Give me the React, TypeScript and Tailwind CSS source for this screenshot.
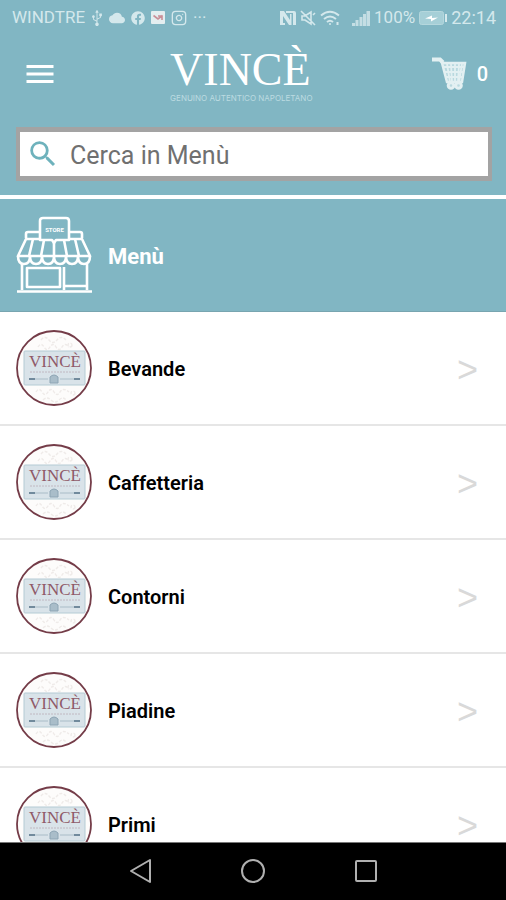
import React from 'react';
import { FaFacebook, FaUsb } from 'react-icons/fa';
import { MdCloud, MdMenu, MdSearch } from 'react-icons/md';
import { Instagram } from 'lucide-react';

const categories = ['Bevande', 'Caffetteria', 'Contorni', 'Piadine', 'Primi'];

const MailIcon = () => (
  <svg viewBox="0 0 14 14" className="w-3.5 h-3.5">
    <rect width="14" height="13" rx="1" fill="#e4eef0" />
    <path d="M2.500 4.500 7 8l4.500-3.500M7 5h4v4" fill="none" stroke="#c98f98" strokeWidth="1.600" />
  </svg>
);

const NfcIcon = () => (
  <svg viewBox="0 0 16 16" className="w-4 h-4" fill="currentColor">
    <path d="M0 1h4l6 9V4h1.500v11H9L3 6v7h2v2H0z" />
    <path d="M6 1h8q2 0 2 2v12h-3V3H6z" />
  </svg>
);

const MuteIcon = () => (
  <svg viewBox="0 0 16 16" className="w-4 h-4" fill="none" stroke="currentColor" strokeWidth="1.600">
    <path d="M2 6h3l6-4v12L5 10H2zM1 1l14 14M13 5l2-2" />
  </svg>
);

const WifiIcon = () => (
  <svg viewBox="0 0 20 16" className="w-5 h-4" fill="none" stroke="currentColor" strokeWidth="2">
    <path d="M1 5.500Q10-2 19 5.500M4 9q6-5 12 0M7 12q3-2.500 6 0" />
    <circle cx="10" cy="14" r="1" fill="currentColor" stroke="none" />
    <path d="M17.500 12v3" />
  </svg>
);

const SignalIcon = () => (
  <svg viewBox="0 0 18 16" className="w-[18px] h-4" fill="currentColor">
    <path d="M0 13h3v3H0zM3.500 10h3v6h-3zM7.500 7h3v9h-3zM11 4h3v12h-3zM14.500 1h3.500v15h-3.500z" opacity=".8" />
  </svg>
);

const BatteryIcon = () => (
  <svg viewBox="0 0 28 14" className="w-7 h-3.5">
    <rect x=".5" y=".5" width="24" height="13" rx="2" fill="#a6cfd7" stroke="#b5d7dd" />
    <rect x="26" y="3" width="2" height="8" fill="#d7eaed" />
    <path d="M6 7.500l7-3v2.500l6-.5-7 4V8z" fill="#fff" />
  </svg>
);

const CartIcon = () => (
  <svg viewBox="0 0 36 34" className="w-9 h-[34px]" fill="none" stroke="#e3f0f2">
    <path d="M1 2.500h8l3 3" strokeWidth="4" />
    <path d="M11 6h23l-3 19H16z" fill="#b9d9df" strokeWidth="2.500" />
    <path d="M12 10h21M13 15h20M14 20h18M16 7l3 18M20 7l1 18M24 7v18M28 7l-1 18M31 7l-3 18" strokeWidth="1.800" />
    <circle cx="20" cy="28.500" r="2.800" fill="#b9d9df" strokeWidth="3" />
    <circle cx="27.500" cy="28.500" r="2.800" fill="#b9d9df" strokeWidth="3" />
  </svg>
);

const StoreIcon = () => (
  <svg viewBox="0 0 76 78" className="w-[76px] h-[78px] shrink-0" fill="none" stroke="#fff" strokeWidth="2.600" strokeLinejoin="round">
    <path d="M24 24V5q0-3 3-3h23q3 0 3 3v19H40l-2 3-2-3z" />
    <path d="M24 16H12q-2 0-2 2v4M53 16h11q2 0 2 2v4" />
    <path d="M24 23H10L2 40h72L66 23H53" />
    <path d="M17 23l-4 17M28 24l-3 16M38 27v13M48 24l3 16M59 23l4 17" />
    <path d="M2 40q0 8 6 8t6-8q0 8 6 8t6-8q0 8 6 8t6-8q0 8 6 8t6-8q0 8 6 8t6-8q0 8 6 8t6-8" />
    <path d="M6 48v26M71 48v26M11 52h33v19H11zM48 51v23M48 70h23M1 75.500h75" />
    <text x="38.500" y="16" textAnchor="middle" fill="#fff" stroke="none" fontSize="6" fontWeight="700" className="font-['Roboto',sans-serif]">STORE</text>
  </svg>
);

const Badge = () => (
  <svg viewBox="0 0 76 76" className="w-[76px] h-[76px] shrink-0">
    <circle cx="38" cy="38" r="37" fill="#fdfcfb" stroke="#743c48" strokeWidth="1.800" />
    <g fill="none" stroke="#efebe9" strokeWidth="1.400" strokeDasharray="3 1.500">
      <path d="M25 10q4-5 8 0t8 0 9 0M22 17q3-5 6 0t6 0 6 0 6 0 7 0" />
      <path d="M20 62q3-5 6 0t6 0 6 0 6 0 9 0M27 70q4-4 8 0t8 0 7 0" />
      <circle cx="54" cy="15" r="2" />
      <circle cx="57" cy="63" r="2" />
    </g>
    <rect x="8" y="21" width="61" height="34" rx="1" fill="#d9e3e9" stroke="#b4cbd4" />
    <text x="39" y="37" textAnchor="middle" fontSize="17" fill="#8f5968" className="font-['Liberation_Serif',serif]">VINCÈ</text>
    <path d="M14 42h50" stroke="#c0b8c1" strokeDasharray="2 1" />
    <path d="M13 49h6M58 49h6" stroke="#718a9c" strokeWidth="2" />
    <path d="M19 49h13M44 49h14" stroke="#a9bcc7" />
    <path d="M34 53v-6q4-4 8 0v6z" fill="#a9bdc9" stroke="#8da5b4" />
  </svg>
);

const StatusBar = () => (
  <div className="flex items-center justify-between pl-3 pr-2.5 h-9 text-[17px] text-[#d4e8ec]">
    <div className="flex items-center gap-1.5">
      <span>WINDTRE</span>
      <FaUsb className="w-4 h-4 -mx-0.5 -rotate-90" />
      <MdCloud className="w-4 h-4" />
      <FaFacebook className="w-3.5 h-3.5" />
      <MailIcon />
      <Instagram className="w-4 h-4" />
      <span>···</span>
    </div>
    <div className="flex items-center gap-1">
      <NfcIcon />
      <MuteIcon />
      <WifiIcon />
      <span className="w-1" />
      <SignalIcon />
      <span>100%</span>
      <BatteryIcon />
      <span className="text-lg">22:14</span>
    </div>
  </div>
);

const Header = () => (
  <header className="bg-[#81b6c3] border-b-4 border-white">
    <StatusBar />
    <div className="flex items-center justify-between h-[91px] pl-[22px] pr-[18px] pb-4">
      <button type="button" aria-label="Apri menu" className="text-white">
        <MdMenu className="w-9 h-9" />
      </button>
      <div className="flex flex-col items-start text-white">
        <span className="font-['Liberation_Serif',serif] text-[46px] leading-[48px]">VINCÈ</span>
        <span className="text-[8px] leading-2 text-[#bcdbe1] font-['Inter',sans-serif]">GENUINO AUTENTICO NAPOLETANO</span>
      </div>
      <button type="button" aria-label="Carrello" className="flex items-center gap-2.5 pl-1.5 text-xl font-medium text-white">
        <CartIcon />
        <span>0</span>
      </button>
    </div>
    <div className="pl-4 pr-3.5 pb-3.5">
      <label className="flex items-center gap-2.5 h-[54px] px-1.5 bg-white border-x-4 border-y-[5px] border-[#a3a3a3]">
        <MdSearch className="w-[34px] h-[34px] shrink-0 text-[#6eb2bc]" />
        <input
          type="text"
          aria-label="Cerca in Menù"
          placeholder="Cerca in Menù"
          className="w-full pt-1 text-[25px] outline-none placeholder:text-[#707070]"
        />
      </label>
    </div>
  </header>
);

const CategoryRow = ({ name }: { name: string }) => (
  <li className="border-b-2 border-[#e6e6e6]">
    <a href="#" className="flex items-center gap-4 h-28 pl-4 pr-7">
      <Badge />
      <span className="flex-1 pt-0.5 text-xl font-semibold text-black">{name}</span>
      <span className="pt-1 text-4xl leading-none text-[#d9d9d9] font-['Liberation_Sans',sans-serif]">&gt;</span>
    </a>
  </li>
);

const NavBar = () => (
  <nav className="flex justify-center items-center gap-[88px] h-[58px] pb-0.5 shrink-0 bg-black border-t border-[#777]">
    <button type="button" aria-label="Indietro">
      <svg viewBox="0 0 24 26" className="w-6 h-[26px]" fill="none" stroke="#b0b0b0" strokeWidth="2" strokeLinejoin="round">
        <path d="M22 2v22L3 13z" />
      </svg>
    </button>
    <button type="button" aria-label="Home">
      <svg viewBox="0 0 26 26" className="w-[26px] h-[26px]" fill="none" stroke="#b0b0b0" strokeWidth="2">
        <circle cx="13" cy="13" r="11" />
      </svg>
    </button>
    <button type="button" aria-label="Recenti">
      <svg viewBox="0 0 24 24" className="w-6 h-6" fill="none" stroke="#b0b0b0" strokeWidth="2">
        <rect x="2" y="2" width="20" height="20" rx="1" />
      </svg>
    </button>
  </nav>
);

export default function App() {
  return (
    <div className="flex flex-col h-dvh bg-white font-['Roboto',sans-serif]">
      <Header />
      <main className="flex-1 min-h-0 overflow-hidden">
        <div className="flex items-center gap-4 h-[113px] px-4 bg-[#81b6c3] border-b border-[#78a5b0]">
          <StoreIcon />
          <h1 className="pt-0.5 text-[22px] font-bold text-white">Menù</h1>
        </div>
        <ul>
          {categories.map((name) => (
            <CategoryRow key={name} name={name} />
          ))}
        </ul>
      </main>
      <NavBar />
    </div>
  );
}
